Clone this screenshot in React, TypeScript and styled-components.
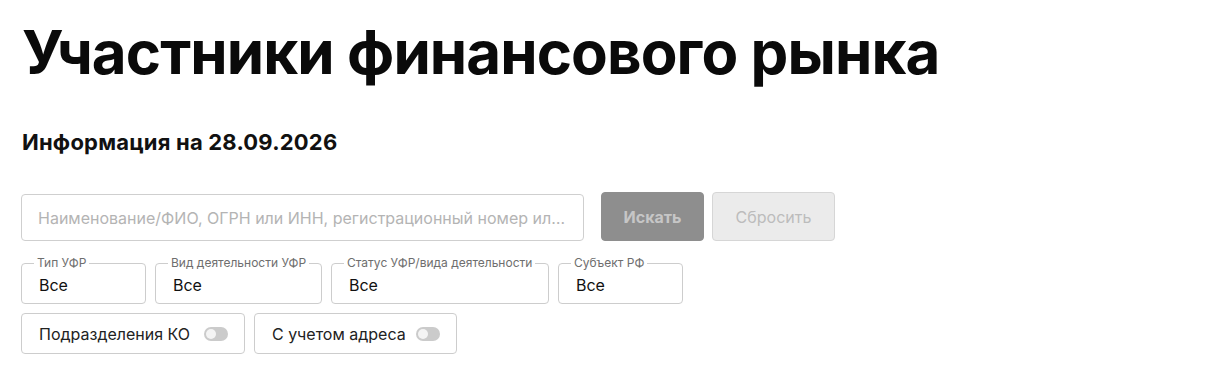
import React from 'react';
import styled, { createGlobalStyle } from 'styled-components';

const GlobalStyle = createGlobalStyle`
    * { box-sizing: border-box; }
    body {
        margin: 0;
        background: #fff;
        font-family: Inter, "Liberation Sans", Arial, sans-serif;
        color: #111;
    }
`;

const Page = styled.div`
    padding: 16px 0 0 22px;
`;

const Title = styled.h1`
    margin: 0;
    font-family: Inter, "Noto Sans", sans-serif;
    font-weight: 700;
    font-size: 60px;
    line-height: 72px;
    letter-spacing: -0.9px;
    color: #0a0a0a;
`;

const Subtitle = styled.h3`
    margin: 41px 0 0;
    font-family: Inter, "Noto Sans", sans-serif;
    font-weight: 700;
    font-size: 22px;
    line-height: 26px;
    letter-spacing: 0.2px;
    color: #111;
`;

const SearchRow = styled.div`
    display: flex;
    align-items: flex-end;
    margin-top: 37px;
`;

const SearchInput = styled.input`
    width: 563px;
    height: 47px;
    margin-left: -1px;
    padding: 0 16px;
    border: 1px solid #cfcfcf;
    border-radius: 4px;
    font-family: Inter, "Liberation Sans", Arial, sans-serif;
    font-size: 16px;
    text-overflow: ellipsis;
    outline: none;

    &::placeholder {
        color: #b4b4b4;
    }
`;

const Button = styled.button<{ $primary?: boolean }>`
    height: 49px;
    width: ${p => (p.$primary ? '103px' : '123px')};
    margin-left: ${p => (p.$primary ? '17px' : '8px')};
    border-radius: 4px;
    border: 1px solid ${p => (p.$primary ? '#8e8e8e' : '#d6d6d6')};
    background: ${p => (p.$primary ? '#8e8e8e' : '#ebebeb')};
    color: ${p => (p.$primary ? '#c6c6c6' : '#bcbcbc')};
    font-family: Inter, "Liberation Sans", Arial, sans-serif;
    font-size: 16px;
    font-weight: ${p => (p.$primary ? 700 : 400)};
    cursor: default;
`;

const Row = styled.div<{ $top: number }>`
    display: flex;
    gap: 9px;
    margin-top: ${p => p.$top}px;
    margin-left: -1px;
`;

const SelectBox = styled.div<{ $w: number }>`
    position: relative;
    width: ${p => p.$w}px;
    height: 41px;
    border: 1px solid #cdcdcd;
    border-radius: 4px;
    display: flex;
    align-items: center;
    padding: 3px 0 0 17px;
    font-size: 16px;
    color: #111;
`;

const Legend = styled.span`
    position: absolute;
    top: -8px;
    left: 12px;
    padding: 0 3px;
    background: #fff;
    font-size: 12px;
    line-height: 14px;
    color: #6e6e6e;
`;

const ToggleBox = styled.label<{ $w: number }>`
    width: ${p => p.$w}px;
    height: 41px;
    border: 1px solid #cdcdcd;
    border-radius: 4px;
    display: flex;
    align-items: center;
    justify-content: space-between;
    padding: 0 16px 0 17px;
    font-size: 16px;
    color: #222;
`;

const Switch = styled.span`
    position: relative;
    width: 24px;
    height: 14px;
    border-radius: 7px;
    background: #cbcbcb;

    &::after {
        content: '';
        position: absolute;
        left: 2px;
        top: 2px;
        width: 10px;
        height: 10px;
        border-radius: 50%;
        background: #f4f4f4;
    }
`;

const filters = [
    { label: 'Тип УФР', w: 125 },
    { label: 'Вид деятельности УФР', w: 167 },
    { label: 'Статус УФР/вида деятельности', w: 218 },
    { label: 'Субъект РФ', w: 125 },
];

const toggles = [
    { label: 'Подразделения КО', w: 224 },
    { label: 'С учетом адреса', w: 203 },
];

const App = () => (
    <>
        <GlobalStyle />
        <Page>
            <Title>Участники финансового рынка</Title>
            <Subtitle>Информация на 28.09.2026</Subtitle>
            <SearchRow>
                <SearchInput placeholder="Наименование/ФИО, ОГРН или ИНН, регистрационный номер или лицензия" />
                <Button $primary>Искать</Button>
                <Button>Сбросить</Button>
            </SearchRow>
            <Row $top={22}>
                {filters.map(f => (
                    <SelectBox key={f.label} $w={f.w}>
                        <Legend>{f.label}</Legend>
                        Все
                    </SelectBox>
                ))}
            </Row>
            <Row $top={9}>
                {toggles.map(t => (
                    <ToggleBox key={t.label} $w={t.w}>
                        {t.label}
                        <Switch />
                    </ToggleBox>
                ))}
            </Row>
        </Page>
    </>
);

export default App;
